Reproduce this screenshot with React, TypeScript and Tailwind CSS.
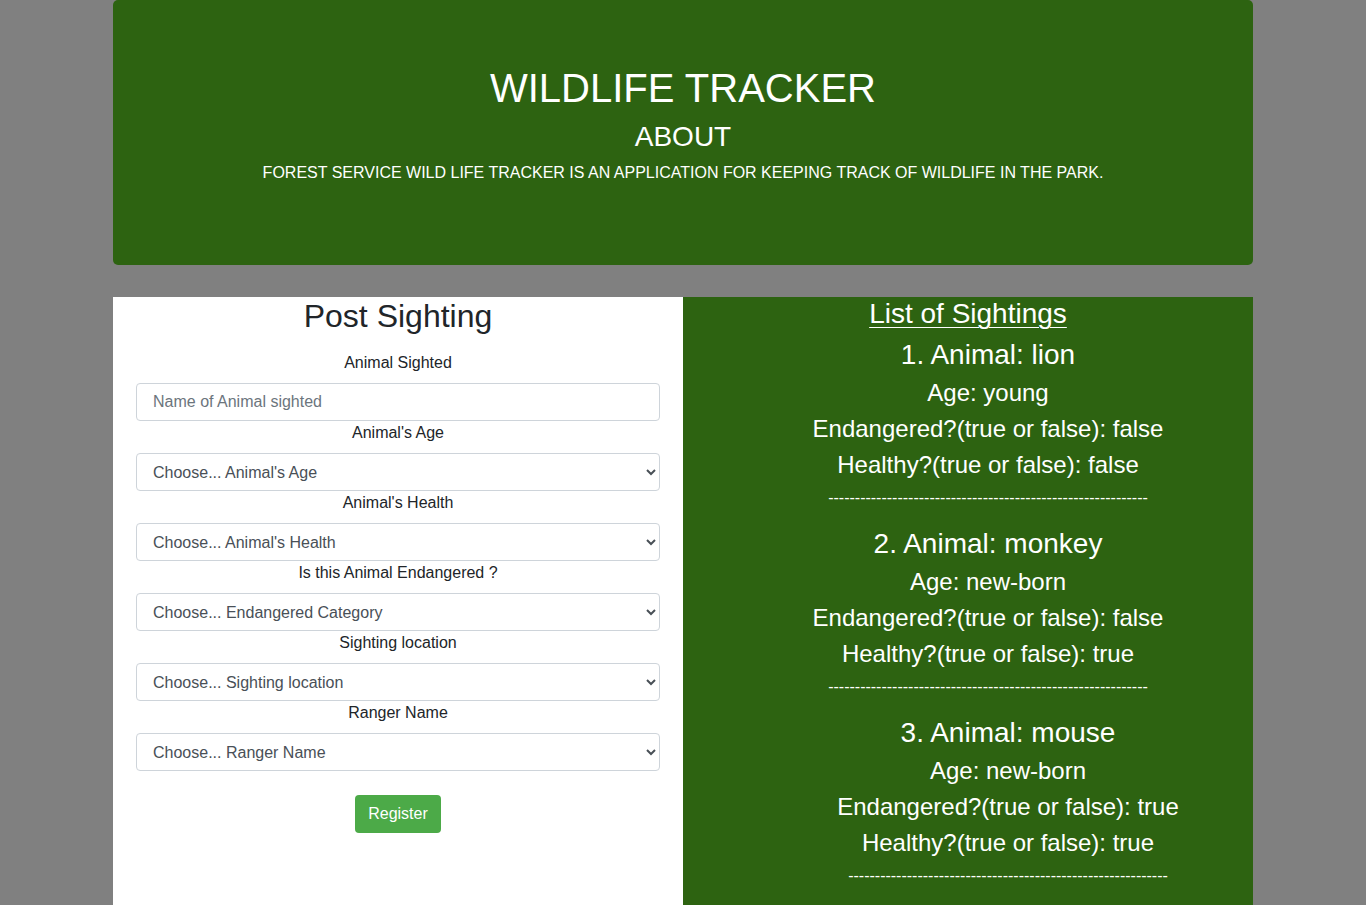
import React from 'react';

const sightings = [
  { id: 1, name: 'lion', age: 'young', endangered: 'false', healthy: 'false', nested: false },
  { id: 2, name: 'monkey', age: 'new-born', endangered: 'false', healthy: 'true', nested: false },
  { id: 3, name: 'mouse', age: 'new-born', endangered: 'true', healthy: 'true', nested: true },
];

const dashes = '-'.repeat(60);

const Field = ({ label, children }: { label: string; children: React.ReactNode }) => (
  <div className="flex flex-col">
    <label className="text-center text-base leading-6 mb-2 text-[#212529]">{label}</label>
    {children}
  </div>
);

const selectCls =
  'w-full h-[38px] pl-3 pr-2 text-base text-[#495057] bg-white border border-[#ced4da] rounded';

export default function App() {
  return (
    <div className="min-h-screen bg-[#808080] font-['Liberation_Sans',Arial,sans-serif]">
      <div className="w-[1140px] mx-auto">
        <div className="bg-[#2d6311] rounded-[5px] pt-16 pb-16 px-8 text-center text-white mb-8">
          <h1 className="text-[40px] leading-[48px] mb-2">WILDLIFE TRACKER</h1>
          <h3 className="text-[28px] leading-[33px] mb-2">ABOUT</h3>
          <p className="text-base leading-6 mb-4">
            FOREST SERVICE WILD LIFE TRACKER IS AN APPLICATION FOR KEEPING TRACK OF WILDLIFE IN THE PARK.
          </p>
        </div>

        <div className="grid grid-cols-2">
          <div className="bg-white px-[23px] pb-[72px]">
            <h2 className="text-[32px] leading-[38px] text-center text-[#212529] mb-4">Post Sighting</h2>
            <form className="flex flex-col">
              <Field label="Animal Sighted">
                <input
                  type="text"
                  placeholder="Name of Animal sighted"
                  className="w-full h-[38px] pl-4 pr-3 text-base text-[#495057] placeholder:text-[#6c757d] bg-white border border-[#ced4da] rounded"
                />
              </Field>
              <Field label="Animal's Age">
                <select className={selectCls} defaultValue="">
                  <option value="">Choose... Animal's Age</option>
                </select>
              </Field>
              <Field label="Animal's Health">
                <select className={selectCls} defaultValue="">
                  <option value="">Choose... Animal's Health</option>
                </select>
              </Field>
              <Field label="Is this Animal Endangered ?">
                <select className={selectCls} defaultValue="">
                  <option value="">Choose... Endangered Category</option>
                </select>
              </Field>
              <Field label="Sighting location">
                <select className={selectCls} defaultValue="">
                  <option value="">Choose... Sighting location</option>
                </select>
              </Field>
              <Field label="Ranger Name">
                <select className={selectCls} defaultValue="">
                  <option value="">Choose... Ranger Name</option>
                </select>
              </Field>
              <div className="flex justify-center mt-6">
                <button
                  type="button"
                  className="h-[38px] px-[13px] text-base text-white bg-[#4caa48] rounded"
                >
                  Register
                </button>
              </div>
            </form>
          </div>

          <div className="bg-[#2d6311] text-white text-center">
            <h3 className="text-[28px] leading-[34px] underline underline-offset-[4px] decoration-1 mb-[7px]">List of Sightings</h3>
            <div className="pl-10">
              {sightings.map((s) => (
                <div key={s.id} className={s.nested ? 'pl-10' : ''}>
                  <h3 className="text-[28px] leading-[34px] mb-[3px]">
                    {s.id}. Animal: {s.name}
                  </h3>
                  <p className="text-[24px] leading-[36px]">Age: {s.age}</p>
                  <p className="text-[24px] leading-[36px]">Endangered?(true or false): {s.endangered}</p>
                  <p className="text-[24px] leading-[36px]">Healthy?(true or false): {s.healthy}</p>
                  <p className="text-base leading-6 mt-[3px] mb-[17px]">{dashes}</p>
                </div>
              ))}
            </div>
          </div>
        </div>
      </div>
    </div>
  );
}
